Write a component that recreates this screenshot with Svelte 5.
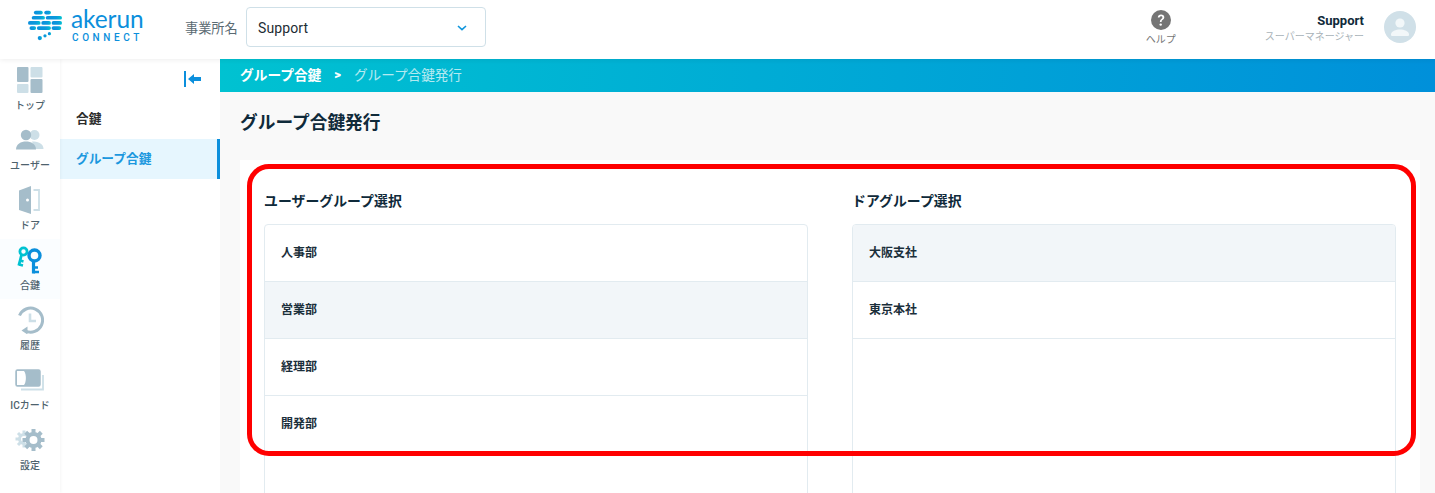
<script>
  const nav = [
    { key: 'top', label: 'トップ' },
    { key: 'user', label: 'ユーザー' },
    { key: 'door', label: 'ドア' },
    { key: 'key', label: '合鍵', active: true },
    { key: 'history', label: '履歴' },
    { key: 'card', label: 'ICカード' },
    { key: 'gear', label: '設定' }
  ];
  const users = [
    { n: '人事部' },
    { n: '営業部', sel: true },
    { n: '経理部' },
    { n: '開発部' }
  ];
  const doors = [{ n: '大阪支社', sel: true }, { n: '東京本社' }];
  const gearTeeth = [0, 45, 90, 135, 180, 225, 270, 315];
</script>

<div class="page">
  <header class="top">
    <div class="logo">
      <svg width="34" height="31" viewBox="1 2 46 40">
        <defs>
          <linearGradient id="lg" x1="0" x2="1" y1="0" y2="0">
            <stop offset="0" stop-color="#0b8fdc" />
            <stop offset="0.65" stop-color="#0b9bdc" />
            <stop offset="1" stop-color="#00c4cf" />
          </linearGradient>
        </defs>
        <g fill="url(#lg)">
          <rect x="9" y="2" width="12" height="5" rx="2.500" />
          <rect x="23" y="2" width="9" height="5" rx="2.500" />
          <rect x="6" y="9" width="18" height="5" rx="2.500" />
          <rect x="25" y="9" width="22" height="5" rx="2.500" />
          <rect x="1" y="16" width="17" height="5" rx="2.500" />
          <rect x="19" y="16" width="13" height="5" rx="2.500" />
          <rect x="33" y="16" width="14" height="5" rx="2.500" />
          <rect x="3" y="23" width="9" height="5" rx="2.500" />
          <rect x="13" y="23" width="19" height="5" rx="2.500" />
          <rect x="33" y="23" width="13" height="5" rx="2.500" />
          <circle cx="30" cy="33" r="2.200" />
          <circle cx="24" cy="36" r="2.200" />
          <circle cx="17" cy="39" r="2.900" />
        </g>
      </svg>
      <div class="wordmark">
        <span class="ak">akerun</span>
        <span class="cn">CONNECT</span>
      </div>
    </div>
    <span class="office">事業所名</span>
    <div class="select">
      <span>Support</span>
      <svg width="10" height="6" viewBox="0 0 10 6"><path d="M1 1l4 3.600L9 1" fill="none" stroke="#0f95dc" stroke-width="1.600" /></svg>
    </div>
    <div class="spacer"></div>
    <div class="help">
      <svg width="20" height="20" viewBox="0 0 20 20">
        <circle cx="10" cy="10" r="10" fill="#757575" />
        <path d="M6.800 7.600c0-1.900 1.400-3 3.300-3s3.200 1.100 3.200 2.700c0 2.400-2.700 2.400-2.700 4.600H8.900c0-3 2.500-3 2.500-4.500 0-.7-.5-1.200-1.300-1.200-.9 0-1.400.6-1.500 1.400z" fill="#fff" />
        <circle cx="9.700" cy="14.600" r="1.200" fill="#fff" />
      </svg>
      <span>ヘルプ</span>
    </div>
    <div class="who">
      <strong>Support</strong>
      <span>スーパーマネージャー</span>
    </div>
    <div class="avatar">
      <svg width="32" height="32" viewBox="0 0 32 32">
        <circle cx="16" cy="16" r="16" fill="#d0e0e8" />
        <circle cx="16" cy="12" r="4.600" fill="#f2f7f9" />
        <path d="M7 23.500c0-3.500 5-5 9-5s9 1.500 9 5v.5a1 1 0 0 1-1 1H8a1 1 0 0 1-1-1z" fill="#f2f7f9" />
      </svg>
    </div>
  </header>

  <div class="body">
    <nav class="rail">
      {#each nav as item}
        <div class="rail-item" class:active={item.active}>
          <div class="ico">
            {#if item.key === 'top'}
              <svg width="26" height="26" viewBox="0 0 26 26">
                <rect x="0" y="0" width="11.500" height="15" rx="1" fill="#a5bdca" />
                <rect x="13.500" y="0" width="12" height="10.500" rx="1" fill="#cddfe7" />
                <rect x="0" y="17" width="11.500" height="9" rx="1" fill="#cddfe7" />
                <rect x="13.500" y="12" width="12" height="14" rx="1" fill="#a5bdca" />
              </svg>
            {:else if item.key === 'user'}
              <svg width="28" height="22" viewBox="0 0 28 22">
                <circle cx="18.500" cy="6" r="5" fill="#cddfe7" />
                <path d="M16 12.500c5 0 11.500 1.500 11.500 7.500h-9z" fill="#cddfe7" />
                <circle cx="10" cy="6" r="5.200" fill="#a5bdca" />
                <path d="M0 20.500c0-5.500 5-8 10-8s10 2.500 10 8z" fill="#a5bdca" />
              </svg>
            {:else if item.key === 'door'}
              <svg width="24" height="28" viewBox="0 0 24 28">
                <path d="M1 4.500 13 0v28L1 24z" fill="#a5bdca" />
                <circle cx="9.500" cy="14" r="1.500" fill="#fff" />
                <path d="M15.500 4h5.500v20h-5.500" fill="none" stroke="#cddfe7" stroke-width="1.800" />
              </svg>
            {:else if item.key === 'key'}
              <svg width="26" height="28" viewBox="0 0 26 28">
                <g fill="none" stroke="#00c2d1" stroke-width="2.800">
                  <circle cx="6.500" cy="5.500" r="3.600" />
                  <path d="M4.500 9 1.800 19.500" />
                  <path d="M2 18.500l4 1M3.200 14.500l3.300 1" stroke-width="2.400" />
                </g>
                <g fill="none" stroke="#0b8fdc" stroke-width="3.400">
                  <circle cx="17.500" cy="9.500" r="5.500" />
                  <path d="M16.500 15v12.500" stroke-width="3.200" />
                  <path d="M16.500 26h5.500M16.500 21.500h4.500" stroke-width="2.400" />
                </g>
              </svg>
            {:else if item.key === 'history'}
              <svg width="28" height="28" viewBox="0 0 28 28">
                <path d="M3.500 9.500A12 12 0 1 1 9.500 25" fill="none" stroke="#a5bdca" stroke-width="3" />
                <path d="M11.500 20.500v8l-6-4z" fill="#a5bdca" />
                <path d="M14 7.500v7.500h6" fill="none" stroke="#cddfe7" stroke-width="2.600" />
              </svg>
            {:else if item.key === 'card'}
              <svg width="30" height="22" viewBox="0 0 30 22">
                <path d="M6 20.500h22V6" fill="none" stroke="#cddfe7" stroke-width="1.800" />
                <rect x="1" y="1" width="24" height="16" rx="1.500" fill="#a5bdca" stroke="#a5bdca" stroke-width="1.500" />
                <path d="M2 2h7c2.500 3 2.500 11 0 14H2z" fill="#fff" />
              </svg>
            {:else}
              <svg width="32" height="24" viewBox="0 0 32 24">
                <g fill="#cddfe7">
                  <circle cx="10" cy="11" r="6" />
                  {#each gearTeeth as a}
                    <rect x="8.500" y="2.500" width="3" height="4" transform="rotate({a} 10 11)" />
                  {/each}
                </g>
                <circle cx="10" cy="11" r="3" fill="#fff" />
                <circle cx="19.500" cy="12" r="8.500" fill="#fff" />
                <g fill="#a5bdca">
                  {#each gearTeeth as a}
                    <rect x="17.500" y="1" width="4" height="5" transform="rotate({a} 19.500 12)" />
                  {/each}
                </g>
                <circle cx="19.500" cy="12" r="6" fill="none" stroke="#a5bdca" stroke-width="4" />
              </svg>
            {/if}
          </div>
          <span class="lbl">{item.label}</span>
        </div>
      {/each}
    </nav>

    <aside class="sub">
      <div class="collapse">
        <svg width="18" height="16" viewBox="0 0 18 16">
          <rect x="0" y="0" width="2" height="16" fill="#0b8fdc" />
          <path d="M4 8l6-5v3h7v4h-7v3z" fill="#0b8fdc" />
        </svg>
      </div>
      <div class="sub-item">合鍵</div>
      <div class="sub-item current">グループ合鍵</div>
    </aside>

    <main class="main">
      <div class="crumbs">
        <strong>グループ合鍵</strong>
        <b>&gt;</b>
        <span>グループ合鍵発行</span>
      </div>
      <h1>グループ合鍵発行</h1>
      <section class="card">
        <div class="col">
          <h2>ユーザーグループ選択</h2>
          <div class="list">
            {#each users as u}
              <div class="row" class:sel={u.sel}>{u.n}</div>
            {/each}
          </div>
        </div>
        <div class="col">
          <h2>ドアグループ選択</h2>
          <div class="list">
            {#each doors as d}
              <div class="row" class:sel={d.sel}>{d.n}</div>
            {/each}
          </div>
        </div>
      </section>
    </main>
  </div>
  <div class="mark"></div>
</div>

<style>
  :global(body) {
    margin: 0;
    background: #f9f9f9;
  }
  .page {
    position: relative;
    width: 1435px;
    height: 493px;
    overflow: hidden;
    font-family: Roboto, "Noto Sans CJK JP", sans-serif;
    color: #0f2a3a;
    display: flex;
    flex-direction: column;
  }
  .top {
    height: 59px;
    flex: none;
    background: #fff;
    display: flex;
    align-items: center;
    box-shadow: 0 1px 5px rgba(0, 0, 0, 0.07);
    position: relative;
    z-index: 2;
  }
  .logo {
    width: 185px;
    flex: none;
    display: flex;
    align-items: center;
    padding-left: 28px;
    box-sizing: border-box;
    gap: 9px;
    height: 59px;
  }
  .logo svg {
    margin-top: -8px;
    overflow: visible;
    flex: none;
  }
  .wordmark {
    display: flex;
    flex-direction: column;
    color: #0b8fdc;
    margin-top: -9px;
  }
  .ak {
    font-family: Lato, sans-serif;
    font-size: 24.500px;
    line-height: 26px;
    font-weight: 400;
    letter-spacing: -0.1px;
  }
  .cn {
    font-size: 10px;
    line-height: 12px;
    font-weight: 500;
    letter-spacing: 3.600px;
    margin-left: 1px;
  }
  .office {
    font-size: 13.200px;
    color: #5a6a72;
    width: 61px;
    flex: none;
    margin-top: -5px;
  }
  .select {
    width: 240px;
    height: 40px;
    box-sizing: border-box;
    border: 1px solid #cfe0e8;
    border-radius: 4px;
    display: flex;
    align-items: center;
    justify-content: space-between;
    padding: 1px 18px 0 11px;
    font-size: 14px;
    color: #1d2c34;
    margin-top: -5px;
    letter-spacing: 0.1px;
  }
  .spacer {
    flex: 1;
  }
  .help {
    width: 40px;
    display: flex;
    flex-direction: column;
    align-items: center;
    margin-right: 84px;
    margin-top: -2px;
    color: #757575;
    font-size: 10px;
    line-height: 14px;
    gap: 3px;
  }
  .help svg {
    margin-top: -1px;
  }
  .who {
    display: flex;
    flex-direction: column;
    align-items: flex-end;
    margin-top: -3px;
    margin-right: 20px;
  }
  .who strong {
    font-size: 13px;
    line-height: 18px;
    font-weight: 700;
  }
  .who span {
    font-size: 10px;
    line-height: 14px;
    color: #a8b2b8;
  }
  .avatar {
    margin-right: 19px;
    height: 32px;
    margin-top: -5px;
  }
  .body {
    flex: 1;
    display: flex;
    min-height: 0;
  }
  .rail {
    width: 60px;
    flex: none;
    background: #fff;
    box-shadow: 1px 0 3px rgba(0, 0, 0, 0.04);
    position: relative;
    z-index: 1;
  }
  .rail-item {
    height: 60px;
    box-sizing: border-box;
    display: flex;
    flex-direction: column;
    align-items: center;
    padding-top: 6px;
  }
  .rail-item.active {
    background: #fafdff;
  }
  .ico {
    height: 30px;
    display: flex;
    align-items: center;
    justify-content: center;
  }
  .rail-item .lbl {
    font-size: 10px;
    line-height: 14px;
    margin-top: 4px;
    color: #4e626d;
    font-weight: 500;
    white-space: nowrap;
  }
  .sub {
    width: 160px;
    flex: none;
    box-sizing: border-box;
    background: #fff;
  }
  .collapse {
    height: 40px;
    display: flex;
    justify-content: flex-end;
    align-items: center;
    padding-right: 18px;
  }
  .sub-item {
    height: 40px;
    display: flex;
    align-items: center;
    padding: 0 0 4px 16px;
    font-size: 12.700px;
    font-weight: 700;
    color: #2c2c2c;
    box-sizing: border-box;
  }
  .sub-item.current {
    background: #e6f6fe;
    color: #1b98de;
    border-right: 3px solid #0b8fdc;
  }
  .main {
    flex: 1;
    min-width: 0;
    background: #f9f9f9;
  }
  .crumbs {
    height: 33px;
    display: flex;
    align-items: center;
    padding: 0 0 3px 20px;
    box-sizing: border-box;
    background: linear-gradient(95deg, #00c2d1 0%, #0090da 100%);
    color: #fff;
    font-size: 13.700px;
  }
  .crumbs strong {
    font-weight: 700;
    margin-right: 13px;
  }
  .crumbs b {
    font-size: 13px;
    font-weight: 900;
    margin-right: 13px;
  }
  .crumbs span {
    opacity: 0.7;
    font-size: 13.600px;
  }
  h1 {
    margin: 0;
    font-size: 17.700px;
    line-height: 26px;
    font-weight: 700;
    padding: 18px 0 0 20px;
    height: 50px;
    color: #0f2a3a;
    box-sizing: content-box;
  }
  .card {
    margin: 0 15px 0 20px;
    padding: 24px 24px 0;
    background: #fff;
    display: grid;
    grid-template-columns: 544px 544px;
    column-gap: 44px;
    height: 400px;
    box-sizing: border-box;
  }
  h2 {
    margin: 8px 0 13px;
    font-size: 13.900px;
    line-height: 19px;
    font-weight: 700;
    color: #0f2a3a;
  }
  .list {
    height: 400px;
    border: 1px solid #e2ebf0;
    border-radius: 4px;
    box-sizing: border-box;
    overflow: hidden;
  }
  .row {
    height: 57px;
    box-sizing: border-box;
    display: flex;
    align-items: center;
    padding: 0 0 4px 16px;
    font-size: 12px;
    font-weight: 700;
    color: #1b2f3b;
    border-bottom: 1px solid #e2ebf0;
  }
  .row.sel {
    background: #f2f6f9;
  }
  .mark {
    position: absolute;
    left: 247px;
    top: 164px;
    width: 1169px;
    height: 292px;
    box-sizing: border-box;
    border: 5px solid #f00;
    border-radius: 22px;
    pointer-events: none;
    z-index: 5;
  }
</style>
